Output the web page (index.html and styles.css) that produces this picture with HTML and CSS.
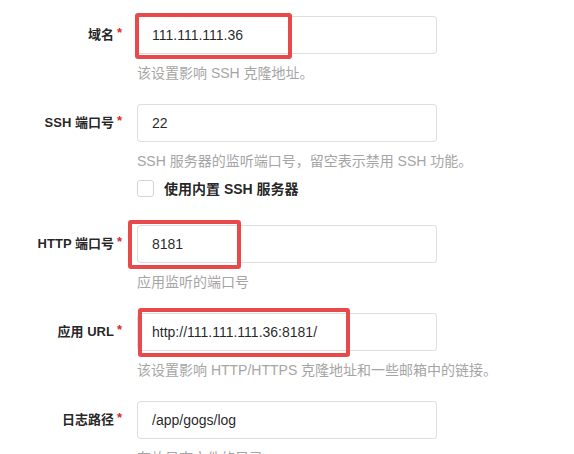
FILE: index.html
```html
<!DOCTYPE html>
<html lang="zh-CN">
<head>
<meta charset="utf-8">
<title>安装</title>
<link rel="stylesheet" href="styles.css">
</head>
<body>
<form class="form">
  <div class="field">
    <div class="row">
      <label class="label required">域名</label>
      <div class="control">
        <input class="input" type="text" value="111.111.111.36">
        <span class="mark mark-domain"></span>
      </div>
    </div>
    <div class="help">该设置影响 SSH 克隆地址。</div>
  </div>

  <div class="field">
    <div class="row">
      <label class="label required">SSH 端口号</label>
      <div class="control">
        <input class="input" type="text" value="22">
      </div>
    </div>
    <div class="help">SSH 服务器的监听端口号，留空表示禁用 SSH 功能。</div>
    <div class="check-row">
      <span class="checkbox"></span>
      <span class="check-label">使用内置 SSH 服务器</span>
    </div>
  </div>

  <div class="field">
    <div class="row">
      <label class="label required">HTTP 端口号</label>
      <div class="control">
        <input class="input" type="text" value="8181">
        <span class="mark mark-port"></span>
      </div>
    </div>
    <div class="help">应用监听的端口号</div>
  </div>

  <div class="field">
    <div class="row">
      <label class="label required">应用 URL</label>
      <div class="control">
        <input class="input" type="text" value="http://111.111.111.36:8181/">
        <span class="mark mark-url"></span>
      </div>
    </div>
    <div class="help">该设置影响 HTTP/HTTPS 克隆地址和一些邮箱中的链接。</div>
  </div>

  <div class="field">
    <div class="row">
      <label class="label required">日志路径</label>
      <div class="control">
        <input class="input" type="text" value="/app/gogs/log">
      </div>
    </div>
    <div class="help">存放日志文件的目录</div>
  </div>
</form>
</body>
</html>
```

FILE: styles.css
```css
html, body {
  margin: 0;
  padding: 0;
  background: #ffffff;
}

body {
  font-family: "Liberation Sans", "Noto Sans CJK SC", sans-serif;
  font-size: 14px;
  color: rgba(0, 0, 0, 0.87);
  overflow: hidden;
}

.form {
  padding-top: 16px;
  display: flex;
  flex-direction: column;
}

.field {
  display: flex;
  flex-direction: column;
  margin-bottom: 21px;
}

.row {
  display: flex;
  align-items: center;
  gap: 15px;
}

.label {
  width: 122px;
  text-align: right;
  font-size: 13px;
  font-weight: 700;
  color: rgba(0, 0, 0, 0.87);
  line-height: 18px;
}

.label.required::after {
  content: "*";
  color: #db2828;
  margin-left: 3px;
  position: relative;
  top: -2px;
}

.control {
  position: relative;
  width: 300px;
}

.input {
  box-sizing: border-box;
  width: 300px;
  height: 38px;
  margin: 0;
  padding: 0 14px;
  border: 1px solid rgba(34, 36, 38, 0.15);
  border-radius: 4px;
  font-family: "Liberation Sans", "Noto Sans CJK SC", sans-serif;
  font-size: 14px;
  color: rgba(0, 0, 0, 0.87);
  background: #fff;
  outline: none;
}

.help {
  margin-top: 9px;
  margin-left: 137px;
  line-height: 20px;
  font-size: 14px;
  color: #a5a5a5;
  white-space: nowrap;
}

.check-row {
  display: flex;
  align-items: center;
  gap: 10px;
  margin-left: 137px;
  margin-top: 7px;
  margin-bottom: 6px;
  height: 20px;
}

.checkbox {
  box-sizing: border-box;
  width: 17px;
  height: 17px;
  border: 1px solid #d4d4d5;
  border-radius: 3px;
  background: #fff;
}

.check-label {
  font-size: 14px;
  font-weight: 700;
  color: rgba(0, 0, 0, 0.87);
}

.mark {
  position: absolute;
  box-sizing: border-box;
  border: 4px solid #e84a4c;
  border-radius: 3px;
  pointer-events: none;
}

.mark-domain {
  left: -2px;
  top: -3px;
  width: 157px;
  height: 46px;
}

.mark-port {
  left: -9px;
  top: -5px;
  width: 113px;
  height: 49px;
}

.mark-url {
  left: 1px;
  top: -5px;
  width: 212px;
  height: 49px;
}
```
